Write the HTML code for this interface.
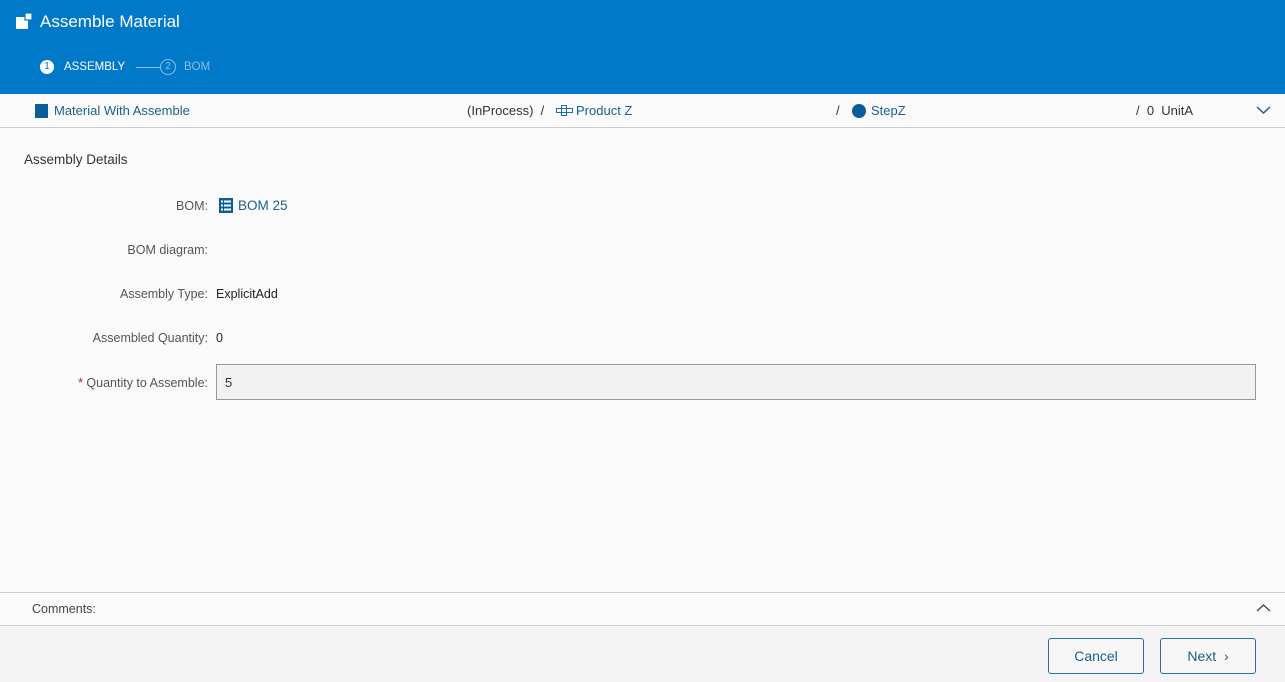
<!DOCTYPE html>
<html><head><style>
body{margin:0;width:1285px;height:681px;background:#fafafa;font-family:"Liberation Sans",sans-serif;font-size:13px;color:#333;position:relative;overflow:hidden}
.a{position:absolute}
.hdr{left:0;top:0;width:1285px;height:94px;background:#0079c8}
.link{color:#1b5e8f}
.lbl{right:1077px;color:#555;font-size:12.5px}
.val{left:216px;color:#222;font-size:12.5px}
.btn{border:1px solid #2e6e9e;border-radius:3px;color:#1b5e8f;font-size:14px;text-align:center;box-sizing:border-box;height:36px;line-height:34px;background:#f7f7f7}
</style></head><body>
<div class="a hdr"></div>
<svg class="a" style="left:16px;top:13px" width="17" height="17"><rect x="0" y="4" width="12" height="12" fill="#fff"/><rect x="9" y="0" width="7" height="7" fill="#fff" stroke="#0079c8" stroke-width="1.2"/></svg>
<div class="a" style="left:40px;top:12px;color:#fff;font-size:17px">Assemble Material</div>
<div class="a" style="left:40px;top:60px;width:14px;height:14px;border-radius:50%;background:#fff;color:#0079c8;font-size:10px;text-align:center;line-height:14px">1</div>
<div class="a" style="left:64px;top:60px;color:#fff;font-size:11.5px;line-height:15px">ASSEMBLY</div>
<div class="a" style="left:136px;top:67px;width:24px;height:1px;background:#8cbde4"></div>
<div class="a" style="left:160px;top:59px;width:14px;height:14px;border-radius:50%;border:1px solid #8cbde4;color:#8cbde4;font-size:10px;text-align:center;line-height:14px">2</div>
<div class="a" style="left:184px;top:60px;color:#8cbde4;font-size:11.5px;line-height:15px">BOM</div>
<div class="a" style="left:0;top:127px;width:1285px;height:1px;background:#ccc"></div>
<div class="a" style="left:35px;top:104px;width:13px;height:14px;background:#0a5f96"></div>
<div class="a link" style="left:54px;top:103px">Material With Assemble</div>
<div class="a" style="left:467px;top:103px">(InProcess)&nbsp; /</div>
<svg class="a" style="left:556px;top:105px" width="17" height="12" fill="none" stroke="#1b6fa8"><rect x="0.5" y="3.5" width="16" height="4"/><rect x="5.5" y="0.5" width="5" height="10"/></svg>
<div class="a link" style="left:576px;top:103px">Product Z</div>
<div class="a" style="left:836px;top:103px">/</div>
<div class="a" style="left:852px;top:104px;width:14px;height:14px;border-radius:50%;background:#0a5f96"></div>
<div class="a link" style="left:871px;top:103px">StepZ</div>
<div class="a" style="left:1136px;top:103px">/ &nbsp;0&nbsp; UnitA</div>
<svg class="a" style="left:1256px;top:106px" width="15" height="9"><path d="M1 1l6.5 6 6.5-6" fill="none" stroke="#1b5e8f" stroke-width="1.5"/></svg>
<div class="a" style="left:24px;top:152px;font-size:13.5px;color:#333">Assembly Details</div>
<div class="a lbl" style="top:199px">BOM:</div>
<svg class="a" style="left:219px;top:198px" width="14" height="15"><rect width="14" height="15" fill="#0a5f96"/><g fill="#fff"><rect x="2" y="2.5" width="2" height="2"/><rect x="5" y="2.5" width="7" height="2"/><rect x="2" y="6.5" width="2" height="2"/><rect x="5" y="6.5" width="7" height="2"/><rect x="2" y="10.5" width="2" height="2"/><rect x="5" y="10.5" width="7" height="2"/></g></svg>
<div class="a link" style="left:238px;top:198px;font-size:13.5px">BOM 25</div>
<div class="a lbl" style="top:243px">BOM diagram:</div>
<div class="a lbl" style="top:287px">Assembly Type:</div>
<div class="a val" style="top:287px">ExplicitAdd</div>
<div class="a lbl" style="top:331px">Assembled Quantity:</div>
<div class="a val" style="top:331px">0</div>
<div class="a lbl" style="top:376px"><span style="color:#b42020">*</span> Quantity to Assemble:</div>
<div class="a" style="left:216px;top:364px;width:1040px;height:36px;box-sizing:border-box;border:1px solid #999;background:#f2f2f2;padding:10px 8px;font-size:13px">5</div>
<div class="a" style="left:0;top:592px;width:1285px;height:1px;background:#ccc"></div>
<div class="a" style="left:32px;top:602px;color:#444;font-size:12.5px">Comments:</div>
<svg class="a" style="left:1256px;top:603px" width="15" height="9"><path d="M1 8l6.5-6 6.5 6" fill="none" stroke="#444" stroke-width="1.3"/></svg>
<div class="a" style="left:0;top:625px;width:1285px;height:56px;background:#f3f3f3;border-top:1px solid #ccc"></div>
<div class="a btn" style="left:1048px;top:638px;width:96px">Cancel</div>
<div class="a btn" style="left:1160px;top:638px;width:96px">Next &nbsp;›</div>
</body></html>
